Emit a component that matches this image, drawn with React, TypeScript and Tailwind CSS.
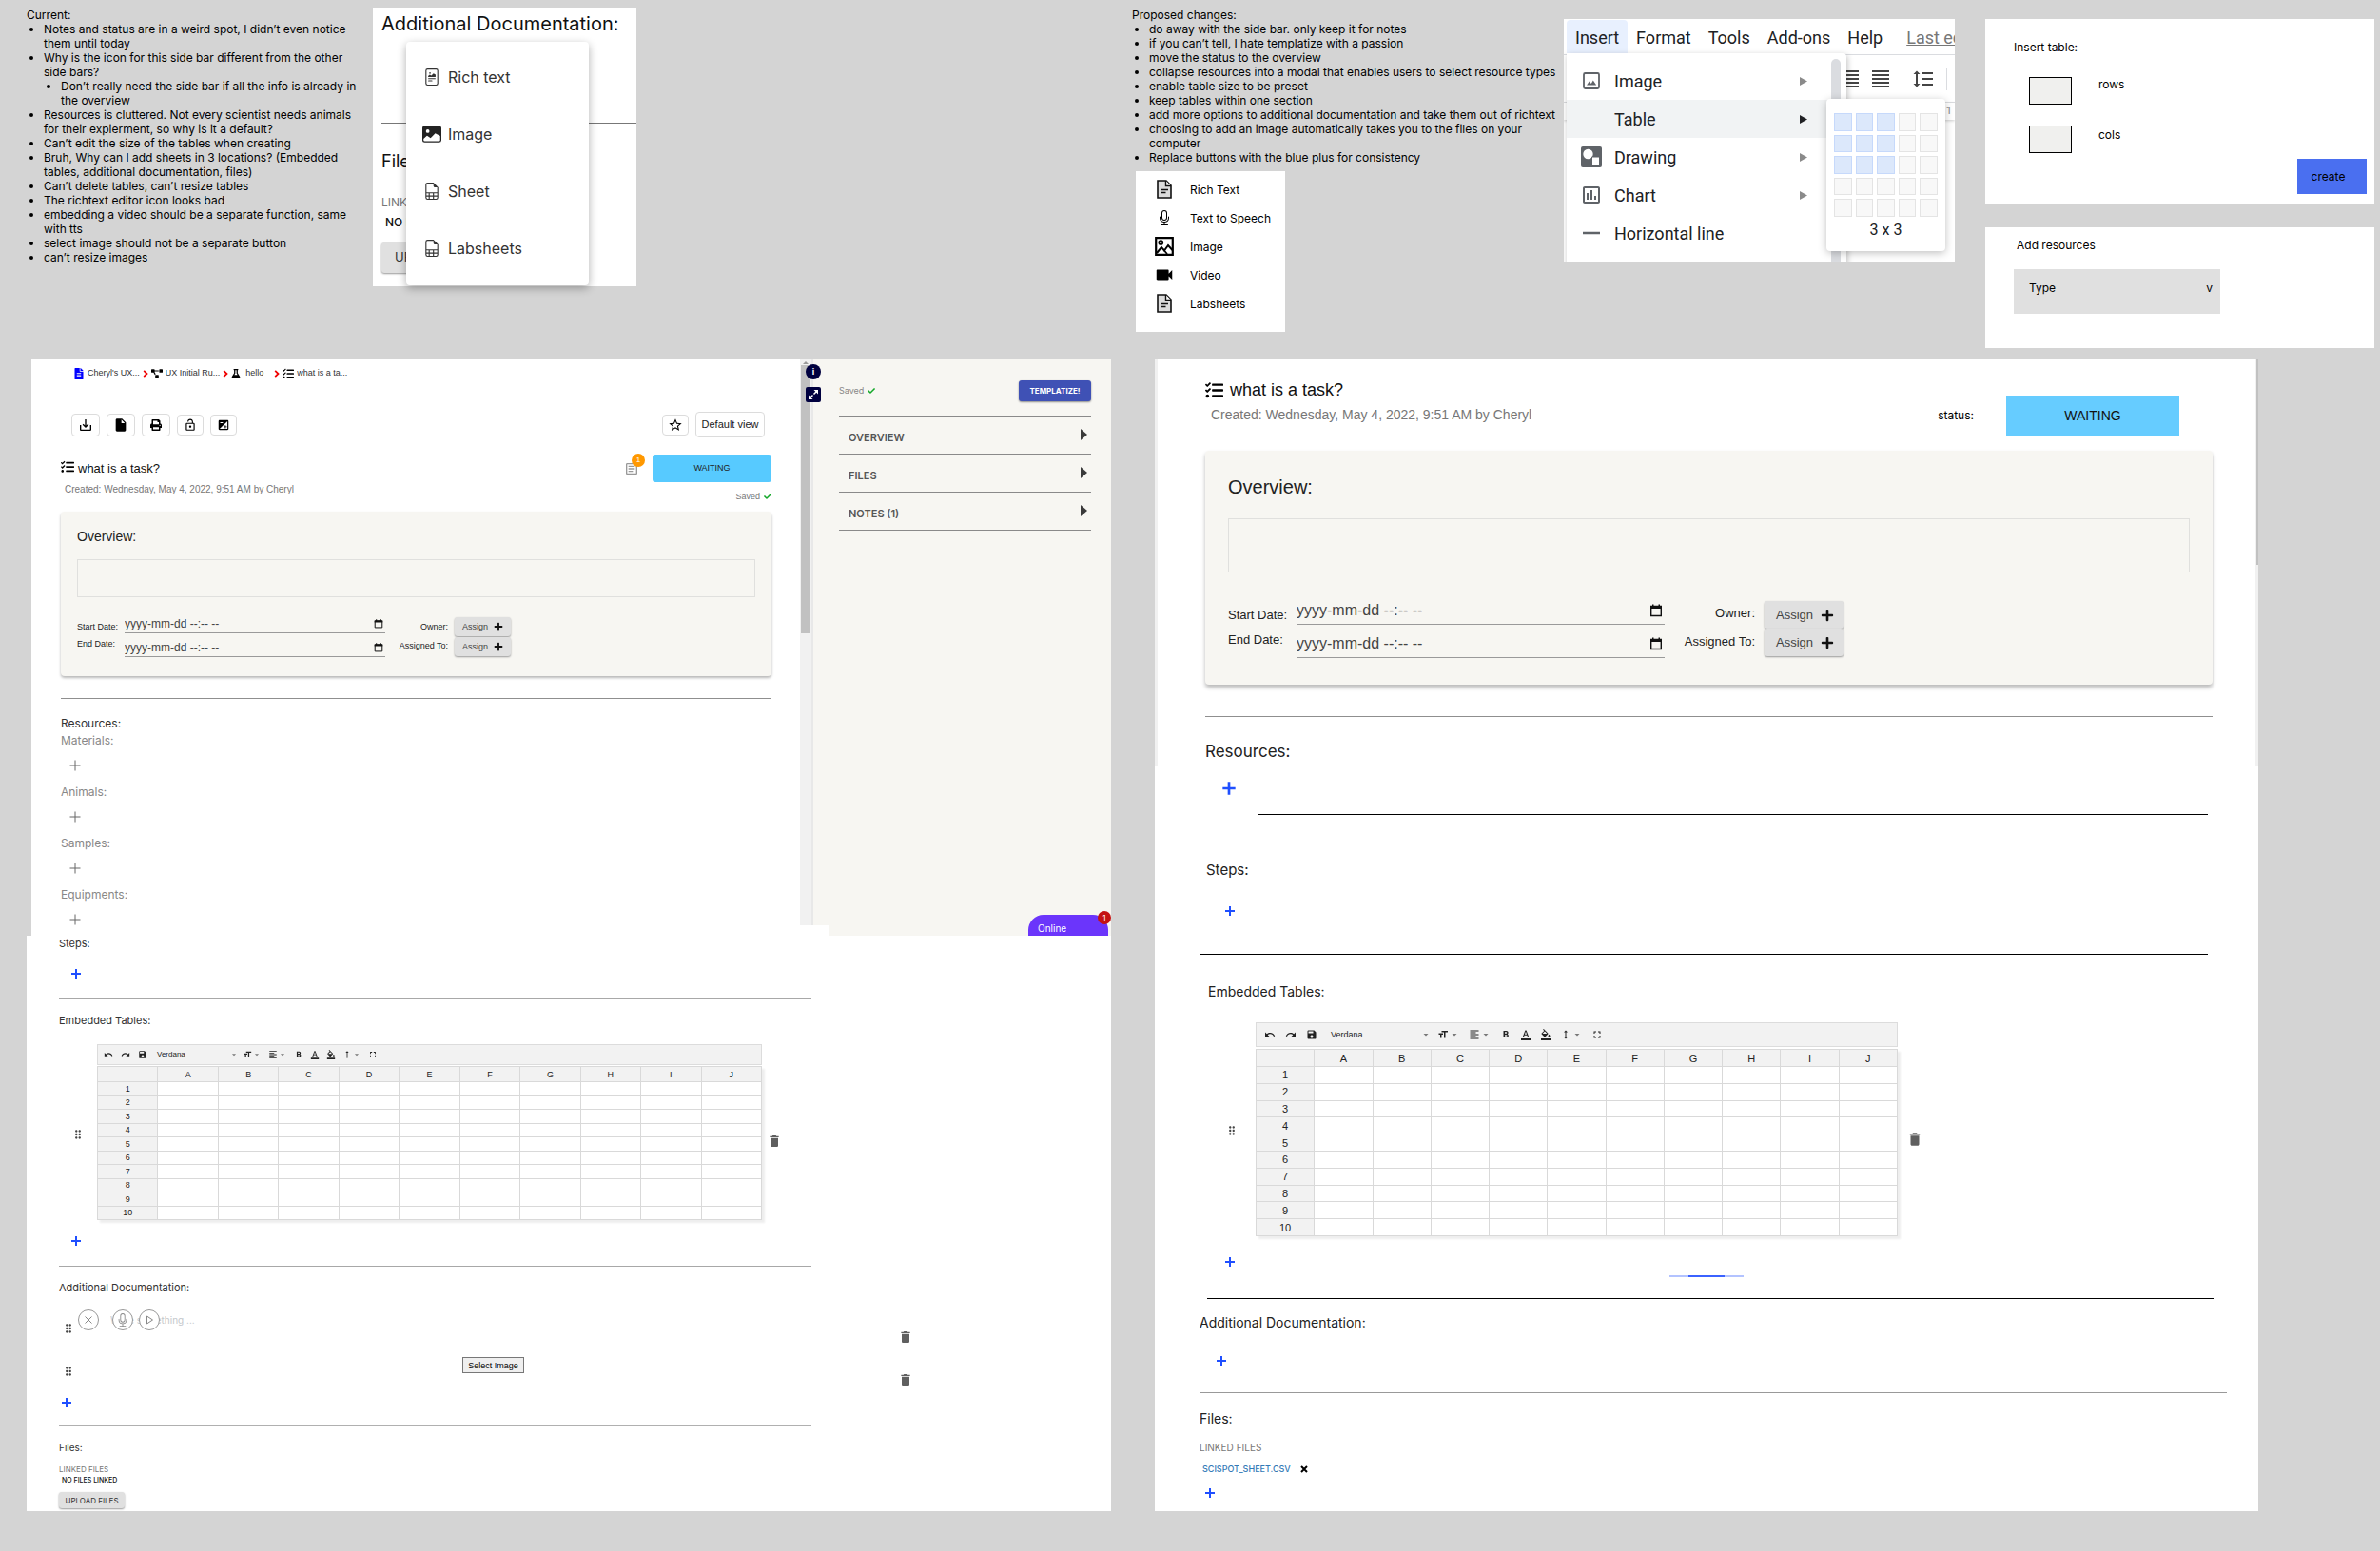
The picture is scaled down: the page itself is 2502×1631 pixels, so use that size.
import type { ReactNode } from "react";
import { BsFileRichtext, BsImageFill, BsFileEarmarkSpreadsheet, BsMic } from "react-icons/bs";
import { FaCheck, FaFileAlt, FaFlask, FaPlus, FaPrint, FaProjectDiagram, FaTasks } from "react-icons/fa";
import {
  MdArrowDropDown,
  MdDelete,
  MdDragIndicator,
  MdExposure,
  MdFormatAlignJustify,
  MdFormatAlignLeft,
  MdFormatBold,
  MdFormatColorFill,
  MdFormatColorText,
  MdFormatLineSpacing,
  MdFormatSize,
  MdFullscreen,
  MdHeight,
  MdInsertDriveFile,
  MdLockOpen,
  MdOutlineArticle,
  MdOutlineInsertChart,
  MdRedo,
  MdSave,
  MdSaveAlt,
  MdStarBorder,
  MdUndo,
  MdVideocam,
} from "react-icons/md";

const COLUMNS = ["A", "B", "C", "D", "E", "F", "G", "H", "I", "J"];
const ROWS = [1, 2, 3, 4, 5, 6, 7, 8, 9, 10];

/* ---------- icons ---------- */

function PlusIcon({ className }: { className: string }) {
  return (
    <svg viewBox="0 0 12 12" className={className} aria-hidden="true">
      <path d="M6 1v10M1 6h10" stroke="currentColor" strokeWidth="2" fill="none" />
    </svg>
  );
}

function ThinPlusIcon() {
  return (
    <svg viewBox="0 0 12 12" className="size-3" aria-hidden="true">
      <path d="M6 .5v11M.5 6h11" stroke="currentColor" strokeWidth="1" fill="none" />
    </svg>
  );
}

function CalendarIcon({ className }: { className: string }) {
  return (
    <svg viewBox="0 0 14 14" className={className} aria-hidden="true">
      <path d="M1.7 2.5h10.6v10H1.7z" fill="none" stroke="#111" strokeWidth="1.4" />
      <path d="M1 2h12v3H1zM3 .5h1.5V2H3zM9.5.5H11V2H9.5z" fill="#111" />
    </svg>
  );
}

function DocumentIcon() {
  return (
    <svg viewBox="0 0 16 20" className="h-5 w-4" aria-hidden="true">
      <path d="M1 1h9l5 5v13H1z" fill="#dcdcdc" stroke="#111" strokeWidth="1.6" />
      <path d="M9.5 1v5.5H15" fill="#fff" stroke="#111" strokeWidth="1.4" />
      <path d="M4 10.5h8M4 13.5h5.5" stroke="#111" strokeWidth="1.5" />
    </svg>
  );
}

function PictureIcon() {
  return (
    <svg viewBox="0 0 20 20" className="size-5" aria-hidden="true">
      <path d="M1.2 1.2h17.6v17.6H1.2z" fill="#fff" stroke="#000" strokeWidth="2.2" />
      <circle cx="6.3" cy="6" r="2" fill="none" stroke="#000" strokeWidth="1.7" />
      <path d="M2 17l5-6 3 3.5L14 9l4.5 5" fill="none" stroke="#000" strokeWidth="2" />
      <path d="M10 14.5l3 3.5" stroke="#000" strokeWidth="1.8" />
    </svg>
  );
}

function GreyImageIcon() {
  return (
    <svg viewBox="0 0 20 20" className="size-5 text-[#5f6368]" aria-hidden="true">
      <rect x="2" y="2" width="16" height="16" rx="1.5" fill="none" stroke="currentColor" strokeWidth="1.8" />
      <path d="M5 14.5l2.8-4 2 2.5 2-3.5 3.4 5z" fill="currentColor" />
    </svg>
  );
}

function DrawingIcon() {
  return (
    <svg viewBox="0 0 22 22" className="size-[22px]" aria-hidden="true">
      <rect width="22" height="22" rx="2" fill="#5f6368" />
      <circle cx="7.5" cy="8" r="5.2" fill="#fff" />
      <path d="M11.5 11h8v8.5h-8z" fill="#fff" stroke="#5f6368" strokeWidth="1" />
    </svg>
  );
}

function DashIcon() {
  return (
    <svg viewBox="0 0 18 18" className="size-[18px]" aria-hidden="true">
      <path d="M0 9h18" stroke="#5f6368" strokeWidth="2.5" />
    </svg>
  );
}

function RightTriangle({ className }: { className: string }) {
  return (
    <svg viewBox="0 0 8 12" className={className} preserveAspectRatio="none" aria-hidden="true">
      <path d="M0 0l8 6-8 6z" fill="currentColor" />
    </svg>
  );
}

function Chevron() {
  return (
    <svg viewBox="0 0 6 8" className="h-2 w-1.5" aria-hidden="true">
      <path d="M1.2.8L4.5 4 1.2 7.2" stroke="#f00000" strokeWidth="1.8" fill="none" />
    </svg>
  );
}

/* ---------- shared pieces ---------- */

function AddButton({ label, className, large = false }: { label: string; className: string; large?: boolean }) {
  return (
    <button type="button" aria-label={label} className={`block text-[#1f4fff] ${className}`}>
      <PlusIcon className={large ? "size-4" : "size-3"} />
    </button>
  );
}

function Spreadsheet({ large = false }: { large?: boolean }) {
  const icon = large ? "size-3" : "size-2.5";
  return (
    <div className="min-w-0 flex-1 font-['Liberation_Sans',sans-serif] text-[#222]">
      <div
        className={`flex items-center border border-[#dcdcdc] bg-[#f2f2f2] ${
          large ? "mb-0.5 h-[26px] px-2 text-[9px]" : "mb-px h-[22px] px-1.5 text-[8px]"
        }`}
      >
        <span className={`flex items-center ${large ? "gap-2.5" : "gap-2"}`}>
          <MdUndo className={icon} />
          <MdRedo className={icon} />
          <MdSave className={icon} />
        </span>
        <span className={`flex items-center justify-between ${large ? "ml-3.5 w-[106px]" : "ml-2.5 w-[86px]"}`}>
          <span>Verdana</span>
          <MdArrowDropDown className={`${icon} text-[#777]`} />
        </span>
        <span className={`flex items-center ${large ? "ml-1.5 gap-[9px]" : "ml-1 gap-[7px]"}`}>
          <span className="flex items-center">
            <MdFormatSize className={icon} />
            <MdArrowDropDown className={`${icon} text-[#777]`} />
          </span>
          <span className="flex items-center">
            <MdFormatAlignLeft className={icon} />
            <MdArrowDropDown className={`${icon} text-[#777]`} />
          </span>
          <MdFormatBold className={icon} />
          <MdFormatColorText className={icon} />
          <MdFormatColorFill className={icon} />
          <span className="flex items-center">
            <MdHeight className={icon} />
            <MdArrowDropDown className={`${icon} text-[#777]`} />
          </span>
          <MdFullscreen className={icon} />
        </span>
      </div>
      <table
        className={`w-full table-fixed border-collapse bg-white text-center shadow-[3px_3px_2px_#eeeeee] ${
          large ? "h-[197px] text-[11px] leading-3" : "h-[162px] text-[9px] leading-[10px]"
        }`}
      >
        <thead>
          <tr className={large ? "h-[18px]" : "h-4"}>
            <td className="border border-[#d9d9d9] bg-[#f2f2f2]" />
            {COLUMNS.map((c) => (
              <th key={c} scope="col" className="border border-[#d9d9d9] bg-[#f2f2f2] font-normal">
                {c}
              </th>
            ))}
          </tr>
        </thead>
        <tbody>
          {ROWS.map((r) => (
            <tr key={r} className={large ? "h-[17px]" : "h-3.5"}>
              <th scope="row" className="border border-[#d9d9d9] bg-[#f2f2f2] font-normal">
                {r}
              </th>
              {COLUMNS.map((c) => (
                <td key={c} className="border border-[#d9d9d9]" />
              ))}
            </tr>
          ))}
        </tbody>
      </table>
    </div>
  );
}

function DateField({ id, large = false }: { id: string; large?: boolean }) {
  return (
    <div className={`flex items-center border-b border-[#9a9a9a] pr-0.5 ${large ? "h-[30px]" : "h-5"}`}>
      <input
        id={id}
        type="text"
        placeholder="yyyy-mm-dd --:-- --"
        className={`min-w-0 flex-1 bg-transparent outline-none placeholder:text-[#444] ${
          large ? "text-[16px]" : "text-[12px]"
        }`}
      />
      <button type="button" aria-label="Open calendar">
        <CalendarIcon className={large ? "size-3.5" : "size-2.5"} />
      </button>
    </div>
  );
}

function AssignButton({ large = false }: { large?: boolean }) {
  return (
    <button
      type="button"
      className={`flex items-center rounded-[3px] bg-[#e0e0e0] text-[#444] shadow-[0_1px_2px_#999999] ${
        large ? "h-[29px] w-[83px] gap-2 pl-3 text-[13px]" : "h-5 w-[59px] gap-1.5 pl-2 text-[9px]"
      }`}
    >
      Assign
      <FaPlus className={large ? "size-3.5 text-[#111]" : "size-2.5 text-[#111]"} />
    </button>
  );
}

function OverviewForm({ prefix, large = false }: { prefix: string; large?: boolean }) {
  return (
    <div
      className={`rounded-[4px] bg-[#f7f6f2] font-['Liberation_Sans',sans-serif] text-[#222] ${
        large
          ? "mt-4 mr-12 ml-[53px] px-6 pt-[26px] pb-7 shadow-[0_3px_4px_#b8b8b8]"
          : "mr-[30px] ml-[31px] mt-[9px] px-[17px] pt-4 pb-5 shadow-[0_2px_3px_#b8b8b8]"
      }`}
    >
      <label htmlFor={`${prefix}-overview`} className={`block ${large ? "text-[20px] leading-6" : "text-[14px] leading-5"}`}>
        Overview:
      </label>
      <textarea
        id={`${prefix}-overview`}
        className={`block w-full resize-none border border-[#e0e0de] bg-transparent outline-none ${
          large ? "mt-[21px] h-[57px]" : "mt-3.5 h-10"
        }`}
      />
      <div className={large ? "mt-[25px] flex text-[13px] leading-5" : "mt-[18px] flex text-[9px] leading-4"}>
        <div className={large ? "flex w-[72px] flex-col gap-1.5 pt-2.5" : "flex w-[50px] flex-col gap-0.5 pt-[5px]"}>
          <label htmlFor={`${prefix}-start`}>Start Date:</label>
          <label htmlFor={`${prefix}-end`}>End Date:</label>
        </div>
        <div className={large ? "flex w-[387px] flex-col gap-[5px]" : "flex w-[274px] flex-col gap-[5px]"}>
          <DateField id={`${prefix}-start`} large={large} />
          <DateField id={`${prefix}-end`} large={large} />
        </div>
        <div
          className={
            large ? "flex w-[95px] flex-col gap-2.5 pt-2 text-right" : "flex w-[66px] flex-col gap-1 pt-[5px] text-right"
          }
        >
          <span>Owner:</span>
          <span>Assigned To:</span>
        </div>
        <div className={large ? "ml-2.5 flex flex-col pt-[5px]" : "ml-[7px] flex flex-col gap-px pt-[3px]"}>
          <AssignButton large={large} />
          <AssignButton large={large} />
        </div>
      </div>
    </div>
  );
}

/* ---------- top row: current state notes ---------- */

function CurrentNotes() {
  return (
    <section className="mr-3.5 w-[350px] text-[12px] leading-[15px] text-black">
      <h2>Current:</h2>
      <ul className="list-disc pl-[18px]">
        <li>Notes and status are in a weird spot, I didn’t even notice them until today</li>
        <li>
          Why is the icon for this side bar different from the other side bars?
          <ul className="list-disc pl-[18px]">
            <li>Don’t really need the side bar if all the info is already in the overview</li>
          </ul>
        </li>
        <li>Resources is cluttered. Not every scientist needs animals for their expierment, so why is it a default?</li>
        <li>Can’t edit the size of the tables when creating</li>
        <li>Bruh, Why can I add sheets in 3 locations? (Embedded tables, additional documentation, files)</li>
        <li>Can’t delete tables, can’t resize tables</li>
        <li>The richtext editor icon looks bad</li>
        <li>embedding a video should be a separate function, same with tts</li>
        <li>select image should not be a separate button</li>
        <li>can’t resize images</li>
      </ul>
    </section>
  );
}

function MenuItem({ icon, children }: { icon: ReactNode; children: ReactNode }) {
  return (
    <li>
      <button type="button" className="flex h-[60px] w-full items-center text-[16px] text-[#333]">
        <span className="flex w-11 justify-center pl-2.5">{icon}</span>
        {children}
      </button>
    </li>
  );
}

function DocumentationMenuCard() {
  return (
    <section className="relative w-[277px] self-start bg-white pt-[5px] pb-3.5 pl-[9px]">
      <h3 className="text-[20px] leading-6 text-[#111]">Additional Documentation:</h3>
      <hr className="mt-[92px] border-[#777]" />
      <h3 className="mt-7 text-[18px] leading-6 text-[#111]">Files:</h3>
      <p className="mt-[23px] text-[12px] leading-4 text-[#777]">LINKED FILES</p>
      <p className="mt-[5px] pl-1 text-[12px] leading-4 font-medium text-[#111]">NO FILES LINKED</p>
      <button
        type="button"
        className="mt-[13px] block h-8 rounded-[3px] bg-[#e0e0e0] px-3.5 text-[13px] text-[#333] shadow-[0_1px_2px_#999999]"
      >
        UPLOAD
      </button>
      <ul className="absolute top-9 left-[35px] w-48 rounded-[4px] bg-white pt-[7px] pb-[9px] shadow-[0_3px_10px_#00000050]">
        <MenuItem icon={<BsFileRichtext className="size-[18px]" />}>Rich text</MenuItem>
        <MenuItem icon={<BsImageFill className="size-5 text-[#222]" />}>Image</MenuItem>
        <MenuItem icon={<BsFileEarmarkSpreadsheet className="size-[18px]" />}>Sheet</MenuItem>
        <MenuItem icon={<BsFileEarmarkSpreadsheet className="size-[18px]" />}>Labsheets</MenuItem>
      </ul>
    </section>
  );
}

/* ---------- top row: proposal ---------- */

function ProposedNotes() {
  const options: { label: string; icon: ReactNode }[] = [
    { label: "Rich Text", icon: <DocumentIcon /> },
    { label: "Text to Speech", icon: <BsMic className="size-4" /> },
    { label: "Image", icon: <PictureIcon /> },
    { label: "Video", icon: <MdVideocam className="size-[22px]" /> },
    { label: "Labsheets", icon: <DocumentIcon /> },
  ];
  return (
    <section className="w-[454px] pt-2 text-[12px] leading-[15px] text-black">
      <h2>Proposed changes:</h2>
      <ul className="list-disc pl-[18px]">
        <li>do away with the side bar. only keep it for notes</li>
        <li>if you can’t tell, I hate templatize with a passion</li>
        <li>move the status to the overview</li>
        <li>collapse resources into a modal that enables users to select resource types</li>
        <li>enable table size to be preset</li>
        <li>keep tables within one section</li>
        <li>add more options to additional documentation and take them out of richtext</li>
        <li>
          choosing to add an image automatically takes you to the files on your
          <br />
          computer
        </li>
        <li>Replace buttons with the blue plus for consistency</li>
      </ul>
      <ul className="mt-[7px] ml-1 w-[157px] bg-white pt-1 pb-[15px]">
        {options.map((o) => (
          <li key={o.label}>
            <button type="button" className="flex h-[30px] w-full items-center pl-[18px]">
              <span className="mr-[15px] flex w-6 justify-center">{o.icon}</span>
              {o.label}
            </button>
          </li>
        ))}
      </ul>
    </section>
  );
}

function InsertMenuCard() {
  const items: { label: string; icon: ReactNode; arrow: boolean }[] = [
    { label: "Image", icon: <GreyImageIcon />, arrow: true },
    { label: "Table", icon: null, arrow: true },
    { label: "Drawing", icon: <DrawingIcon />, arrow: true },
    { label: "Chart", icon: <MdOutlineInsertChart className="size-6 text-[#5f6368]" />, arrow: true },
    { label: "Horizontal line", icon: <DashIcon />, arrow: false },
  ];
  return (
    <section className="relative mt-5 h-[255px] w-[411px] self-start overflow-hidden bg-white font-[Roboto,sans-serif] text-[18px] text-[#202124]">
      <nav className="flex h-[38px] items-end border-b border-[#dadce0] pl-[3px] whitespace-nowrap">
        <button type="button" className="h-9 rounded-t-[4px] bg-[#e8f0fe] px-[9px]">
          Insert
        </button>
        <button type="button" className="h-9 px-[9px]">Format</button>
        <button type="button" className="h-9 px-[9px]">Tools</button>
        <button type="button" className="h-9 px-[9px]">Add-ons</button>
        <button type="button" className="h-9 px-[9px]">Help</button>
        <a href="#history" className="flex h-9 items-center pl-4 text-[#777] underline">
          Last edit
        </a>
      </nav>
      <div className="flex h-[50px] items-center justify-end border-b border-[#dadce0] text-[#444]">
        <MdFormatAlignJustify className="size-6" />
        <MdFormatAlignJustify className="ml-2 size-6" />
        <span className="mx-2.5 h-6 w-px bg-[#dadce0]" />
        <MdFormatLineSpacing className="size-6" />
        <span className="mr-2 ml-3 h-6 w-px bg-[#dadce0]" />
      </div>
      <div className="flex h-[18px] items-center justify-end bg-white pr-[3px] text-[11px] text-[#888] shadow-[0_1px_3px_#cccccc]">1</div>
      <ul className="absolute top-9 left-[3px] h-[240px] w-[294px] rounded-r-[4px] bg-white pt-[9px] shadow-[1px_2px_6px_#00000040]">
        {items.map((item) => (
          <li key={item.label}>
            <button
              type="button"
              className={`flex h-10 w-full items-center pr-[41px] pl-3.5 ${item.label === "Table" ? "bg-[#f1f3f4]" : ""}`}
            >
              <span className="mr-3 flex w-6 justify-center">{item.icon}</span>
              {item.label}
              {item.arrow && (
                <RightTriangle
                  className={`ml-auto h-[9px] w-2 ${item.label === "Table" ? "text-[#202124]" : "text-[#8a8a8a]"}`}
                />
              )}
            </button>
          </li>
        ))}
      </ul>
      <span className="absolute top-[42px] left-[281px] h-[220px] w-2.5 rounded-full bg-[#dadce0]" />
      <div className="absolute top-[84px] left-[276px] w-[125px] rounded-[4px] bg-white pt-[15px] pb-2.5 shadow-[0_2px_8px_#00000040]">
        <div className="mx-2 grid grid-cols-5 gap-1">
          {Array.from({ length: 25 }, (_, i) => (
            <button
              key={i}
              type="button"
              aria-label={`${Math.floor(i / 5) + 1} by ${(i % 5) + 1}`}
              className={`aspect-square border ${
                i % 5 < 3 && i < 15 ? "border-[#c6d9fb] bg-[#dce8fb]" : "border-[#e4e4e4] bg-[#f8f8f8]"
              }`}
            />
          ))}
        </div>
        <p className="mt-0.5 text-center text-[16px] leading-6">3 x 3</p>
      </div>
    </section>
  );
}

function ProposalDialogs() {
  return (
    <div className="ml-8 min-w-0 flex-1 text-[12px] leading-4 text-black">
      <section className="mt-5 h-[194px] bg-white pt-[22px] pl-[30px]">
        <h3>Insert table:</h3>
        <div className="mt-[23px] ml-4 flex gap-7">
          <input id="rows" type="text" className="h-[29px] w-[45px] border border-black bg-[#f0f0ee]" />
          <label htmlFor="rows">rows</label>
        </div>
        <div className="mt-[22px] ml-4 flex gap-7">
          <input id="cols" type="text" className="h-[29px] w-[45px] border border-black bg-[#f0f0ee]" />
          <label htmlFor="cols" className="pt-0.5">cols</label>
        </div>
        <div className="mt-1.5 mr-2 flex justify-end">
          <button type="button" className="h-[37px] w-[73px] bg-[#4a6ff0] pr-2">
            create
          </button>
        </div>
      </section>
      <section className="mt-[25px] h-[127px] bg-white pt-[11px] pl-[30px]">
        <label htmlFor="resource-type" className="ml-[3px] block">
          Add resources
        </label>
        <div className="relative mt-[17px] w-[217px]">
          <select id="resource-type" className="block h-[47px] w-full appearance-none bg-[#e0e0e0] pb-2 pl-4">
            <option>Type</option>
          </select>
          <span className="pointer-events-none absolute top-3 right-2">v</span>
        </div>
      </section>
    </div>
  );
}

/* ---------- current task page ---------- */

function Breadcrumbs() {
  return (
    <nav className="flex h-4 items-center gap-[3px] pl-11 font-['Liberation_Sans',sans-serif] text-[9px] text-[#333]">
      <FaFileAlt className="size-3 text-[#0000ff]" />
      <a href="#notebook">Cheryl's UX...</a>
      <Chevron />
      <FaProjectDiagram className="size-3 text-black" />
      <a href="#project">UX Initial Ru...</a>
      <Chevron />
      <FaFlask className="size-2.5 text-black" />
      <a href="#experiment" className="mr-2 ml-0.5">hello</a>
      <Chevron />
      <FaTasks className="size-3 text-black" />
      <a href="#task">what is a ta...</a>
    </nav>
  );
}

function ToolButton({ label, small = false, children }: { label: string; small?: boolean; children: ReactNode }) {
  return (
    <button
      type="button"
      aria-label={label}
      className={`flex items-center justify-center rounded-[4px] border border-[#dcdcdc] bg-white text-black ${
        small ? "h-[22px] w-7" : "h-6 w-[30px]"
      }`}
    >
      {children}
    </button>
  );
}

function CurrentTaskTop() {
  return (
    <div className="min-w-0 flex-1 bg-white pt-[7px] pb-[11px]">
      <Breadcrumbs />
      <div className="mt-8 mr-[37px] ml-[42px] flex h-[27px] items-center gap-[7px] font-['Liberation_Sans',sans-serif]">
        <ToolButton label="Download"><MdSaveAlt className="size-4" /></ToolButton>
        <ToolButton label="New file"><MdInsertDriveFile className="size-4" /></ToolButton>
        <ToolButton label="Print"><FaPrint className="size-3" /></ToolButton>
        <ToolButton label="Lock" small><MdLockOpen className="size-3.5" /></ToolButton>
        <ToolButton label="Exposure" small><MdExposure className="size-3.5" /></ToolButton>
        <span className="flex-1" />
        <ToolButton label="Favourite" small><MdStarBorder className="size-4" /></ToolButton>
        <button type="button" className="h-[27px] w-[73px] rounded-[4px] border border-[#dcdcdc] text-[11px] text-[#222]">
          Default view
        </button>
      </div>
      <div className="mr-[30px] ml-[31px] mt-[18px] flex items-center font-['Liberation_Sans',sans-serif]">
        <FaTasks className="mb-1 size-3.5" />
        <h1 className="ml-1 text-[13px] leading-5 text-[#111]">what is a task?</h1>
        <span className="relative mr-3.5 ml-auto text-[#999]">
          <MdOutlineArticle className="size-4" />
          <span className="absolute -top-2 left-2 flex size-3.5 items-center justify-center rounded-full bg-[#ff9800] text-[8px] text-white">
            1
          </span>
        </span>
        <button type="button" className="h-[29px] w-[125px] rounded-[3px] bg-[#57caff] text-[9px] text-[#222]">
          WAITING
        </button>
      </div>
      <div className="mr-[30px] ml-[31px] flex items-start justify-between pl-1 font-['Liberation_Sans',sans-serif] text-[#777]">
        <p className="text-[10px] leading-4">Created: Wednesday, May 4, 2022, 9:51 AM by Cheryl</p>
        <p className="mt-2 flex items-center gap-1 text-[9px] leading-[14px]">
          Saved <FaCheck className="size-2 text-[#14a82a]" />
        </p>
      </div>
      <OverviewForm prefix="current" />
      <hr className="mr-[30px] ml-[31px] mt-[23px] border-[#8f8f8f]" />
      <div className="ml-[31px] pt-[18px] text-[12px] leading-4 text-[#888]">
        <h2 className="mb-0.5 text-[#333]">Resources:</h2>
        <div className="flex flex-col gap-3.5">
          {["Materials:", "Animals:", "Samples:", "Equipments:"].map((r) => (
            <div key={r}>
              <h3>{r}</h3>
              <button type="button" aria-label={`Add ${r}`} className="mt-3 ml-[9px] block text-[#666]">
                <ThinPlusIcon />
              </button>
            </div>
          ))}
        </div>
      </div>
    </div>
  );
}

function Sidebar() {
  return (
    <aside className="relative w-[313px] overflow-hidden bg-[#f7f6f2] pt-[22px] pr-[21px] pl-[27px]">
      <div className="flex h-[22px] items-center gap-1 text-[9px] text-[#888]">
        Saved <FaCheck className="size-2 text-[#14a82a]" />
        <button
          type="button"
          className="ml-auto h-[22px] w-[76px] rounded-[3px] bg-[#3f51b5] text-[8px] font-bold text-white shadow-[0_1px_2px_#888888]"
        >
          TEMPLATIZE!
        </button>
      </div>
      <ul className="mt-[15px] border-t border-[#8a8a8a] text-[11px] font-semibold text-[#555]">
        {["OVERVIEW", "FILES", "NOTES (1)"].map((s) => (
          <li key={s}>
            <button
              type="button"
              className="flex h-10 w-full items-start justify-between border-b border-[#8a8a8a] pt-[13px] pr-1 pl-2.5 leading-[18px]"
            >
              {s}
              <RightTriangle className="h-3 w-[7px] text-[#3a3a3a]" />
            </button>
          </li>
        ))}
      </ul>
      <span className="absolute bottom-0 left-0 h-[11px] w-4 bg-white" />
      <button
        type="button"
        className="absolute right-[3px] bottom-0 h-[22px] w-[84px] rounded-t-[16px] bg-[#6b35fb] pt-1.5 pl-2.5 text-left text-[10px] leading-4 text-white"
      >
        Online
      </button>
      <span className="absolute right-0 bottom-3 flex size-3.5 items-center justify-center rounded-full bg-[#c41212] text-[8px] text-white">
        1
      </span>
    </aside>
  );
}

function DragHandle({ className = "" }: { className?: string }) {
  return <MdDragIndicator className={`size-3.5 shrink-0 text-[#444] ${className}`} />;
}

function DeleteButton({ className = "", large = false }: { className?: string; large?: boolean }) {
  return (
    <button type="button" aria-label="Delete" className={`shrink-0 text-[#5f5f5f] ${className}`}>
      <MdDelete className={large ? "size-[18px]" : "size-4"} />
    </button>
  );
}

function CurrentTaskBottom() {
  return (
    <div className="bg-white pb-[3px] pl-[34px] text-[11px] leading-4 text-[#333]">
      <h2>Steps:</h2>
      <AddButton label="Add step" className="mt-[18px] ml-3" />
      <hr className="mt-5 mr-[315px] border-[#a8a8a8]" />
      <h2 className="mt-3.5">Embedded Tables:</h2>
      <div className="mt-[17px] mr-[346px] ml-[13px] flex items-center">
        <DragHandle className="mt-1 mr-[13px]" />
        <Spreadsheet />
        <DeleteButton className="mt-[18px] ml-[5px]" />
      </div>
      <AddButton label="Add table" className="mt-4 ml-3" />
      <hr className="mt-5 mr-[315px] border-[#a8a8a8]" />
      <h2 className="mt-3.5">Additional Documentation:</h2>
      <div className="mt-[15px] mr-[208px] ml-[3px] flex h-9 items-start">
        <DragHandle className="mt-[13px]" />
        <div className="relative ml-[3px] flex-1">
          <input
            type="text"
            aria-label="Document text"
            placeholder="Write something ..."
            className="h-[22px] w-full bg-transparent pl-[34px] text-[10px] outline-none placeholder:text-[#c4c8cc]"
          />
          <div className="absolute top-0 left-0 flex text-[#888]">
            <button
              type="button"
              aria-label="Close"
              className="flex size-[22px] items-center justify-center rounded-full border border-[#999] bg-white"
            >
              <svg viewBox="0 0 10 10" className="size-2.5"><path d="M1.5 1.5l7 7M8.5 1.5l-7 7" stroke="currentColor" /></svg>
            </button>
            <button
              type="button"
              aria-label="Record"
              className="ml-3.5 flex size-[22px] items-center justify-center rounded-full border border-[#999] bg-white"
            >
              <BsMic className="size-3.5" />
            </button>
            <button
              type="button"
              aria-label="Play"
              className="ml-1.5 flex size-[22px] items-center justify-center rounded-full border border-[#999] bg-white"
            >
              <svg viewBox="0 0 10 10" className="size-2.5"><path d="M2.5 1l6 4-6 4z" stroke="currentColor" fill="none" /></svg>
            </button>
          </div>
        </div>
        <DeleteButton className="mt-[21px]" />
      </div>
      <div className="mr-[208px] ml-[3px] flex h-[45px] items-start">
        <DragHandle className="mt-[22px]" />
        <div className="flex flex-1 justify-center pt-3.5 pl-3.5">
          <button
            type="button"
            className="h-[17px] w-[65px] border border-[#777] bg-[#efefef] font-['Liberation_Sans',sans-serif] text-[9px] leading-[14px] text-black"
          >
            Select Image
          </button>
        </div>
        <DeleteButton className="mt-[30px]" />
      </div>
      <AddButton label="Add documentation" className="mt-[11px] ml-0.5" />
      <hr className="mt-[18px] mr-[315px] border-[#b0b0b0]" />
      <h2 className="mt-3.5 text-[10px]">Files:</h2>
      <p className="mt-[9px] text-[8px] leading-3 text-[#777]">LINKED FILES</p>
      <p className="pl-[3px] text-[7px] leading-3 font-medium text-[#111]">NO FILES LINKED</p>
      <button
        type="button"
        className="mt-1.5 block h-[17px] w-[69px] rounded-[3px] bg-[#e0e0e0] text-[8px] leading-[14px] text-[#333] shadow-[0_1px_2px_#999999]"
      >
        UPLOAD FILES
      </button>
    </div>
  );
}

function CurrentTaskPage() {
  return (
    <article>
      <div className="relative ml-[5px] flex">
        <CurrentTaskTop />
        <div className="relative w-3.5 bg-white">
          <div className="mb-[11px] flex h-[595px] flex-col border-r-2 border-[#e8e8e8] bg-[#f1f1f1]">
            <svg viewBox="0 0 12 6" className="h-1.5 w-3"><path d="M3 5l3-3 3 3z" fill="#999" /></svg>
            <span className="mx-px h-[282px] bg-[#c1c1c1]" />
          </div>
          <button
            type="button"
            className="absolute top-[5px] left-1.5 z-10 flex size-4 items-center justify-center rounded-full bg-[#00003f] text-[9px] font-bold text-white"
          >
            i
          </button>
          <button
            type="button"
            aria-label="Expand"
            className="absolute top-[29px] left-1.5 z-10 flex size-4 items-center justify-center rounded-[2px] bg-[#00003f]"
          >
            <svg viewBox="0 0 12 12" className="size-3">
              <path d="M2.5 9.5l3-3M6.5 5.5l3-3" stroke="#fff" strokeWidth="1.5" />
              <path d="M6.5 1H11v4.5zM1 6.5V11h4.5z" fill="#fff" />
            </svg>
          </button>
        </div>
        <Sidebar />
      </div>
      <CurrentTaskBottom />
    </article>
  );
}

/* ---------- proposed task page ---------- */

function ProposedTaskPage() {
  return (
    <article className="relative mr-[122px] ml-6 bg-white pb-3 text-[14px] leading-5 text-[#222]">
      <span className="absolute top-0 left-0 h-[428px] w-[3px] bg-[#f1f1f1]" />
      <span className="absolute top-0 right-0 h-[428px] w-[3px] bg-[#f1f1f1]" />
      <span className="absolute top-0 right-0 h-[216px] w-0.5 bg-[#c1c1c1]" />
      <header className="flex pl-[53px] font-['Liberation_Sans',sans-serif]">
        <div className="pt-5">
          <div className="flex items-center">
            <FaTasks className="size-[19px] text-black" />
            <h1 className="ml-[7px] text-[18px] leading-6 text-[#111]">what is a task?</h1>
          </div>
          <p className="mt-1 ml-1.5 text-[14px] leading-5 text-[#777]">Created: Wednesday, May 4, 2022, 9:51 AM by Cheryl</p>
        </div>
        <div className="mt-[38px] mr-[83px] ml-auto flex items-center gap-[34px]">
          <span className="font-[Inter,sans-serif] text-[12px] text-black">status:</span>
          <button type="button" className="h-[42px] w-[182px] bg-[#66ccff] text-[14px] text-[#111]">
            WAITING
          </button>
        </div>
      </header>
      <OverviewForm prefix="proposed" large />
      <hr className="mt-[33px] mr-12 ml-[53px] border-[#8f8f8f]" />
      <h2 className="mt-[26px] ml-[53px] text-[17px]">Resources:</h2>
      <AddButton label="Add resource" className="mt-[21px] ml-[70px]" large />
      <hr className="mt-[19px] mr-[53px] ml-[108px] border-black" />
      <h2 className="mt-12 ml-[54px] text-[15px]">Steps:</h2>
      <AddButton label="Add step" className="mt-[27px] ml-[73px]" />
      <hr className="mt-[39px] mr-[53px] ml-12 border-black" />
      <h2 className="mt-[29px] ml-14">Embedded Tables:</h2>
      <div className="mt-[22px] mr-[352px] ml-[74px] flex items-center">
        <DragHandle className="mt-0.5 mr-[18px]" />
        <Spreadsheet large />
        <DeleteButton className="mt-5 ml-[9px]" large />
      </div>
      <AddButton label="Add table" className="mt-[21px] ml-[73px]" />
      <div className="mt-2 ml-[541px] flex h-0.5 w-[78px] justify-center bg-[#b3c3ff]">
        <span className="w-[38px] bg-[#3b62ff]" />
      </div>
      <hr className="mt-[22px] mr-[46px] ml-[55px] border-black" />
      <h2 className="mt-[15px] ml-[47px]">Additional Documentation:</h2>
      <AddButton label="Add documentation" className="mt-6 ml-16" />
      <hr className="mt-[27px] mr-[33px] ml-[47px] border-[#999]" />
      <h2 className="mt-[17px] ml-[47px]">Files:</h2>
      <p className="mt-3 ml-[47px] text-[10px] leading-4 text-[#777]">LINKED FILES</p>
      <div className="mt-[7px] ml-[50px] flex items-center gap-2.5">
        <a href="#sheet" className="text-[9px] leading-4 font-medium text-[#337ab7]">
          SCISPOT_SHEET.CSV
        </a>
        <button type="button" aria-label="Remove file">
          <svg viewBox="0 0 8 8" className="size-2"><path d="M1 1l6 6M7 1L1 7" stroke="#000" strokeWidth="2" /></svg>
        </button>
      </div>
      <AddButton label="Add file" className="mt-[11px] ml-[52px]" />
    </article>
  );
}

export default function App() {
  return (
    <main className="grid min-h-screen grid-cols-[1140fr_1306fr] content-start gap-x-[22px] gap-y-3 bg-[#d4d4d4] pr-1.5 pl-7 font-[Inter,sans-serif]">
      <div className="flex pt-2">
        <CurrentNotes />
        <DocumentationMenuCard />
      </div>
      <div className="flex">
        <ProposedNotes />
        <InsertMenuCard />
        <ProposalDialogs />
      </div>
      <CurrentTaskPage />
      <ProposedTaskPage />
    </main>
  );
}
